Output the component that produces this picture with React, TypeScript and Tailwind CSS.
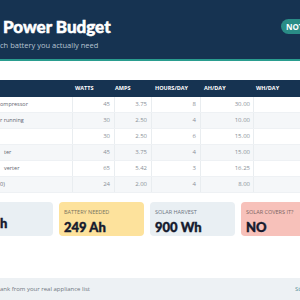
import React from "react";

const rows = [
  { name: "ompressor", nx: "pl-0", w: "45", a: "3.75", h: "8", ah: "30.00" },
  { name: "r running", nx: "pl-0", w: "30", a: "2.50", h: "4", ah: "10.00" },
  { name: "", nx: "pl-0", w: "30", a: "2.50", h: "6", ah: "15.00" },
  { name: "ter", nx: "pl-[4px]", w: "45", a: "3.75", h: "4", ah: "15.00" },
  { name: "verter", nx: "pl-[4px]", w: "65", a: "5.42", h: "3", ah: "16.25" },
  { name: "0)", nx: "pl-0", w: "24", a: "2.00", h: "4", ah: "8.00" },
];

export default function App() {
  return (
    <div
      className="w-[300px] h-[300px] overflow-hidden bg-white flex flex-col"
      style={{ fontFamily: '"Open Sans", "Noto Sans", sans-serif' }}
    >
      {/* Header */}
      <div className="h-[61px] shrink-0 bg-[#163351] border-b-2 border-[#2a9d8f] flex items-start">
        <div className="w-[281px] shrink-0 pl-[3px] pt-[17px]">
          <h1
            className="text-[17px] leading-[20px] font-black text-white whitespace-nowrap [-webkit-text-stroke:0.5px_white]"
            style={{ fontFamily: 'Lato, "Open Sans", sans-serif' }}
          >
            Power Budget
          </h1>
          <p className="text-[7.5px] leading-[10px] text-[#b7c4d2] whitespace-nowrap -ml-[3px] mt-[3px]">
            ch battery you actually need
          </p>
        </div>
        <div className="mt-[19px] h-[15px] shrink-0 rounded-full bg-[#2a8c86] pl-[5px] pr-[8px] flex items-center text-[8px] font-bold text-white whitespace-nowrap">
          NOT ENOUGH
        </div>
      </div>

      {/* Table */}
      <div className="mt-[19px] text-[6px]">
        <div className="grid grid-cols-[72px_42px_37px_49px_53px_1fr] h-[17px] bg-[#163351] text-white font-bold uppercase items-center text-[5.5px]">
          <div />
          <div className="pl-[3px]">Watts</div>
          <div className="pl-[1px]">Amps</div>
          <div className="pl-[4px]">Hours/Day</div>
          <div className="pl-[4px]">Ah/Day</div>
          <div className="pl-[3px]">Wh/Day</div>
        </div>
        {rows.map((r, i) => (
          <div
            key={i}
            className={`grid grid-cols-[72px_42px_37px_49px_53px_1fr] h-[16px] items-stretch border-b border-[#eef1f4] ${
              i % 2 === 1 ? "bg-[#f5f7f9]" : "bg-white"
            }`}
          >
            <div className={`flex items-center text-[5.5px] text-[#5f6670] whitespace-nowrap ${r.nx}`}>{r.name}</div>
            <div className="flex items-center justify-end pr-[4px] text-[#8a9098] border-l border-[#e9edf0]">{r.w}</div>
            <div className="flex items-center justify-end pr-[4px] text-[#8a9098] border-l border-[#e9edf0]">{r.a}</div>
            <div className="flex items-center justify-end pr-[4px] text-[#8a9098] border-l border-[#e9edf0]">{r.h}</div>
            <div className="flex items-center justify-end pr-[3px] text-[#8a9098] border-l border-[#e9edf0]">{r.ah}</div>
            <div className="border-l border-[#e9edf0]" />
          </div>
        ))}
      </div>

      {/* Cards */}
      <div className="mt-[9px] flex gap-[6px] h-[34px]">
        <div className="w-[53px] shrink-0 rounded-r-[4px] bg-[#e9eff3] flex items-end pb-[6px]">
          <span
            className="text-[13px] leading-[14px] font-black text-[#151a2e] [-webkit-text-stroke:0.4px_#151a2e]"
            style={{ fontFamily: 'Lato, "Open Sans", sans-serif' }}
          >
            h
          </span>
        </div>
        <div className="w-[85px] shrink-0 rounded-[4px] bg-[#fde29c] pl-[5px] pt-[6px]">
          <div className="text-[5.5px] leading-[8px] uppercase text-[#7a7360]">Battery needed</div>
          <div
            className="text-[13px] leading-[15px] font-black text-[#151a2e] mt-[4px] [-webkit-text-stroke:0.4px_#151a2e]"
            style={{ fontFamily: 'Lato, "Open Sans", sans-serif' }}
          >
            249 Ah
          </div>
        </div>
        <div className="w-[85px] shrink-0 rounded-[4px] bg-[#e9eff3] pl-[5px] pt-[6px]">
          <div className="text-[5.5px] leading-[8px] uppercase text-[#6b7480]">Solar harvest</div>
          <div
            className="text-[13px] leading-[15px] font-black text-[#151a2e] mt-[4px] [-webkit-text-stroke:0.4px_#151a2e]"
            style={{ fontFamily: 'Lato, "Open Sans", sans-serif' }}
          >
            900 Wh
          </div>
        </div>
        <div className="w-[85px] shrink-0 rounded-[4px] bg-[#f7c1ba] pl-[5px] pt-[6px]">
          <div className="text-[5.5px] leading-[8px] uppercase text-[#7a6462] whitespace-nowrap">Solar covers it?</div>
          <div
            className="text-[13px] leading-[15px] font-black text-[#151a2e] mt-[4px] [-webkit-text-stroke:0.4px_#151a2e]"
            style={{ fontFamily: 'Lato, "Open Sans", sans-serif' }}
          >
            NO
          </div>
        </div>
      </div>

      {/* Footer */}
      <div className="mt-auto h-[22px] bg-[#edf1f4] flex items-center justify-between text-[6px] whitespace-nowrap">
        <span className="text-[#6f7780]">ank from your real appliance list</span>
        <span className="text-[#5a8f96] pr-[0px] w-[5px] overflow-hidden">St</span>
      </div>
    </div>
  );
}
